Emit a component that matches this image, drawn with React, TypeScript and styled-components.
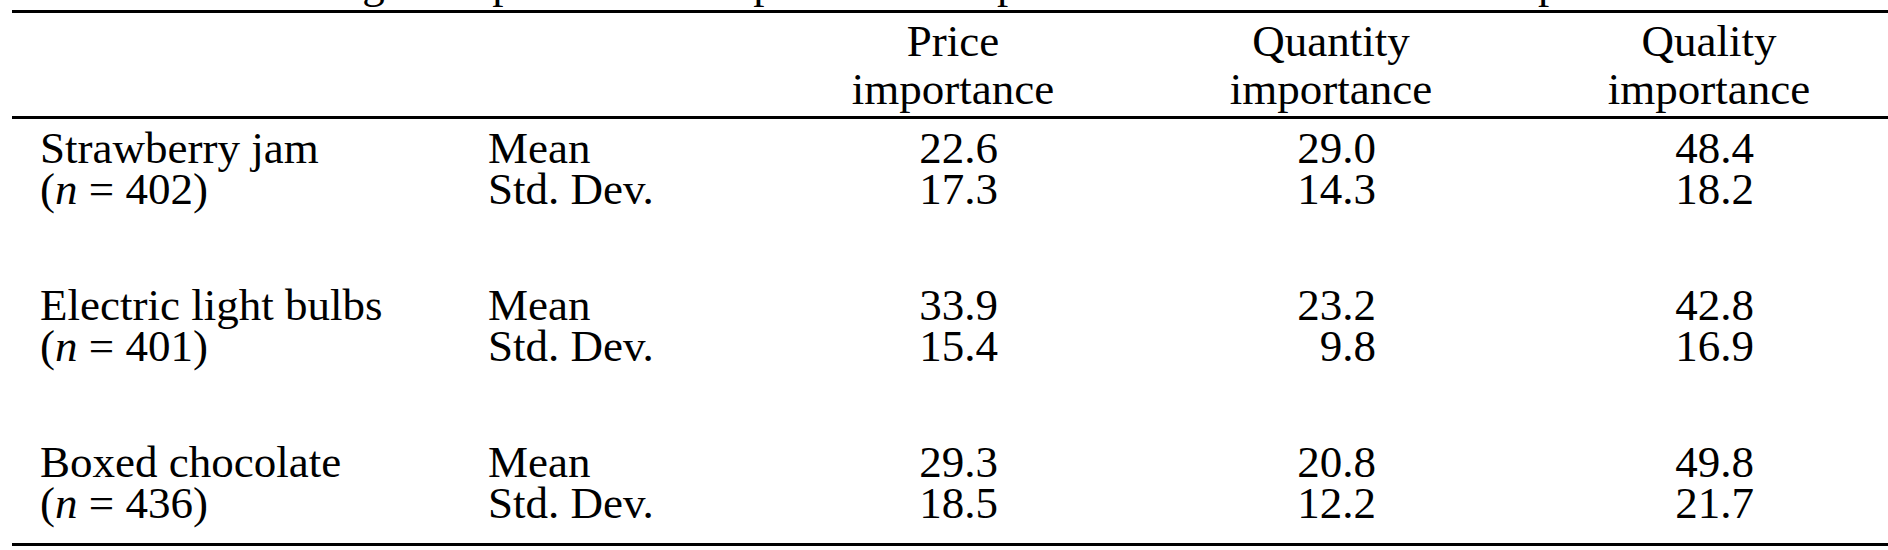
import React from 'react';
import styled, { createGlobalStyle } from 'styled-components';

const GlobalStyle = createGlobalStyle`
    html, body {
        margin: 0;
        padding: 0;
        background: #fff;
        overflow: hidden;
    }
`;

const Sheet = styled.div`
    width: 1920px;
    margin-left: 12px;
    color: #000;
    font-family: 'Liberation Serif', 'Times New Roman', serif;
    font-size: 45px;
`;

// the caption sits above the visible area, only its descenders show
const Caption = styled.div`
    height: 10px;
    overflow: hidden;
    padding-left: 154px;
    white-space: nowrap;
`;

const CaptionText = styled.div`
    line-height: 45px;
    margin-top: -39px;
`;

const Rule = styled.div`
    border-top: 3px solid #000;
`;

const Row = styled.div`
    display: grid;
    grid-template-columns: 448px 276px 378px 378px 378px;
    padding-left: 28px;
`;

const HeadBlock = styled.div`
    padding: 4px 0 3px;
`;

const HeadCell = styled.div`
    text-align: center;
    line-height: 48px;
    white-space: nowrap;
`;

const Body = styled.div`
    padding: 9px 0 19px;
    display: flex;
    flex-direction: column;
    gap: 75px;
`;

const Group = styled.div`
    line-height: 41px;
`;

const Label = styled.div`
    white-space: nowrap;
`;

const Num = styled.div`
    padding-right: 144px;
    text-align: right;
    white-space: nowrap;
`;

type Product = {
    name: string;
    n: number;
    mean: string[];
    sd: string[];
};

const products: Product[] = [
    { name: 'Strawberry jam', n: 402, mean: ['22.6', '29.0', '48.4'], sd: ['17.3', '14.3', '18.2'] },
    { name: 'Electric light bulbs', n: 401, mean: ['33.9', '23.2', '42.8'], sd: ['15.4', '9.8', '16.9'] },
    { name: 'Boxed chocolate', n: 436, mean: ['29.3', '20.8', '49.8'], sd: ['18.5', '12.2', '21.7'] },
];

const App = () => (
    <Sheet>
        <GlobalStyle />
        <Caption>
            <CaptionText>Mean rating of importance as to price and the product attributes in the three purchase tests</CaptionText>
        </Caption>
        <Rule />
        <HeadBlock>
            <Row>
                <div />
                <div />
                <HeadCell>Price<br />importance</HeadCell>
                <HeadCell>Quantity<br />importance</HeadCell>
                <HeadCell>Quality<br />importance</HeadCell>
            </Row>
        </HeadBlock>
        <Rule />
        <Body>
            {products.map(p => (
                <Group key={p.name}>
                    <Row>
                        <Label>{p.name}</Label>
                        <Label>Mean</Label>
                        {p.mean.map((v, i) => <Num key={i}>{v}</Num>)}
                    </Row>
                    <Row>
                        <Label>
                            (<i>n</i> = {p.n})
                        </Label>
                        <Label>Std. Dev.</Label>
                        {p.sd.map((v, i) => <Num key={i}>{v}</Num>)}
                    </Row>
                </Group>
            ))}
        </Body>
        <Rule />
    </Sheet>
);

export default App;
